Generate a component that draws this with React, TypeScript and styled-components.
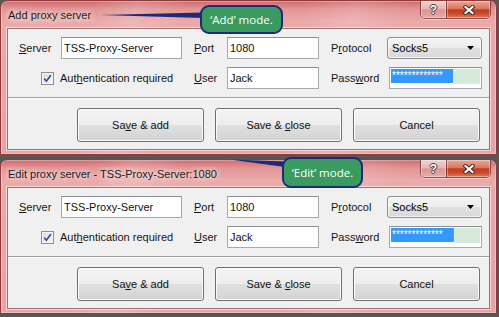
import styled, { createGlobalStyle } from 'styled-components'

const GlobalStyle = createGlobalStyle`
  html, body {
    margin: 0;
    padding: 0;
    background: #575757;
  }
  body {
    font-family: 'Liberation Sans', Arial, sans-serif;
    font-size: 11px;
    color: #151515;
  }
`

const Screen = styled.div`
  position: relative;
  width: 499px;
  height: 317px;
  overflow: hidden;
  display: flex;
  flex-direction: column;
  gap: 4px;
  background: #575757;
`

const Window = styled.div`
  width: 497px;
  height: 155px;
  box-sizing: border-box;
  display: flex;
  flex-direction: column;
  border: 1px solid #8f3a3a;
  border-radius: 7px 7px 0 0;
  overflow: hidden;
  background:
    linear-gradient(100deg, transparent 18%, rgba(255, 255, 255, 0.16) 26%, transparent 36%, transparent 58%, rgba(255, 255, 255, 0.14) 68%, transparent 78%),
    linear-gradient(180deg, #d06b6d 0px, #e29495 8px, #eba9a9 20px, #e8a3a3 100%);
  box-shadow: inset 0 0 0 1px rgba(255, 255, 255, 0.3);
`

const TitleBar = styled.div`
  height: 27px;
  flex-shrink: 0;
  display: flex;
  align-items: flex-start;
  padding: 0 5px 0 7px;
`

const Title = styled.span`
  margin-top: 6px;
  line-height: 16px;
  font-size: 11px;
  color: #1b1b1b;
  text-shadow: 0 0 5px #fff, 0 0 9px rgba(255, 255, 255, 0.8);
`

const CaptionButtons = styled.div`
  margin-left: auto;
  display: flex;
  height: 17px;
  border: 1px solid rgba(90, 35, 35, 0.65);
  border-top: none;
  border-radius: 0 0 5px 5px;
  overflow: hidden;
  box-shadow: 0 1px 0 rgba(255, 255, 255, 0.45);
`

const CaptionButton = styled.div<{ $close?: boolean }>`
  width: ${p => (p.$close ? '43px' : '25px')};
  display: flex;
  align-items: center;
  justify-content: center;
  box-shadow: inset 0 0 0 1px rgba(255, 255, 255, 0.35);
  background: ${p =>
    p.$close
      ? 'linear-gradient(180deg, #e9a896 0%, #da765d 45%, #c23b1d 52%, #cb4a2c 75%, #e27b59 100%)'
      : 'linear-gradient(180deg, #f3d0d0 0%, #eab4b4 45%, #db9797 52%, #e6a9a9 100%)'};
  & + & {
    border-left: 1px solid rgba(90, 35, 35, 0.65);
  }
`

const HelpGlyph = styled.span`
  font-family: 'Liberation Sans', Arial, sans-serif;
  font-weight: bold;
  font-size: 12px;
  line-height: 12px;
  color: #fff;
  text-shadow: 1px 0 #4a3a3a, -1px 0 #4a3a3a, 0 1px #4a3a3a, 0 -1px #4a3a3a;
`

const Frame = styled.div`
  flex: 1;
  display: flex;
  padding: 0 6px 4px;
`

const Panel = styled.div`
  flex: 1;
  display: flex;
  flex-direction: column;
  background: #f0f0f0;
  border: 1px solid #9a7272;
  box-shadow: 0 0 0 1px rgba(255, 255, 255, 0.55);
`

const FormGrid = styled.div`
  display: grid;
  grid-template-columns: 53px 121px 45px 92px 68px 95px;
  grid-auto-rows: 22px;
  row-gap: 8px;
  align-items: center;
  padding: 8px 0;
`

const FieldLabel = styled.label<{ $first?: boolean }>`
  padding-left: ${p => (p.$first ? '11px' : '12px')};
  white-space: nowrap;
`

const Key = styled.u`
  text-decoration: underline;
  text-underline-offset: 1px;
`

const TextInput = styled.input`
  height: 22px;
  width: 100%;
  box-sizing: border-box;
  margin: 0;
  padding: 0 2px;
  border: 1px solid #a6a9ae;
  border-top-color: #8c8f94;
  background: #fff;
  font-family: 'Liberation Sans', Arial, sans-serif;
  font-size: 11px;
  color: #111;
  outline: none;
`

const Combo = styled.div`
  height: 22px;
  box-sizing: border-box;
  display: flex;
  align-items: center;
  justify-content: space-between;
  padding: 0 7px 0 4px;
  border: 1px solid #8e8e8e;
  border-radius: 3px;
  background: linear-gradient(180deg, #f4f4f4 0%, #ececec 50%, #e0e0e0 51%, #dadada 100%);
  box-shadow: inset 0 0 0 1px rgba(255, 255, 255, 0.7);
  color: #000;
`

const PasswordBox = styled.div`
  height: 22px;
  margin-left: 2px;
  box-sizing: border-box;
  display: flex;
  align-items: flex-start;
  padding: 1px;
  border: 1px solid #a6a9ae;
  border-top-color: #8c8f94;
  background: #fff;
`

const Selection = styled.span`
  width: 61px;
  height: 14px;
  display: flex;
  align-items: center;
  padding-left: 1px;
  background: #3399ff;
  color: #fff;
  font-size: 10px;
  line-height: 14px;
  overflow: hidden;
`

const Caret = styled.span`
  width: 1px;
  height: 14px;
  background: #e2801c;
`

const Remainder = styled.span`
  flex: 1;
  height: 15px;
  background: #d6eadb;
`

const CheckField = styled.label`
  grid-column: span 2;
  display: flex;
  align-items: center;
  gap: 6px;
  padding-left: 33px;
  white-space: nowrap;
`

const CheckBox = styled.span`
  width: 13px;
  height: 13px;
  box-sizing: border-box;
  display: flex;
  align-items: center;
  justify-content: center;
  border: 1px solid #8e8f8f;
  background: linear-gradient(135deg, #dadada, #fafafa);
  box-shadow: inset 0 0 0 1px #f5f5f5;
`

const Divider = styled.div`
  height: 1px;
  background: #a0a0a0;
  box-shadow: 0 1px 0 #ffffff;
`

const Actions = styled.div`
  display: flex;
  justify-content: flex-end;
  gap: 11px;
  padding: 10px 9px 7px 0;
`

const Button = styled.button`
  width: 127px;
  height: 34px;
  margin: 0;
  padding: 0;
  border: 1px solid #707070;
  border-radius: 3px;
  background: linear-gradient(180deg, #f4f4f4 0%, #ededed 50%, #e0e0e0 51%, #d3d3d3 100%);
  box-shadow: inset 0 0 0 1px #fbfbfb;
  font-family: 'Liberation Sans', Arial, sans-serif;
  font-size: 11px;
  color: #111;
`

const CalloutBox = styled.div<{ $left: number; $top: number; $width: number; $height: number }>`
  position: absolute;
  left: ${p => p.$left}px;
  top: ${p => p.$top}px;
  width: ${p => p.$width}px;
  height: ${p => p.$height}px;
  box-sizing: border-box;
  display: flex;
  align-items: center;
  justify-content: center;
  border: 2px solid #1c2a78;
  border-radius: 9px;
  background: #3a9a60;
  color: #fff;
  font-family: 'Open Sans', 'Liberation Sans', sans-serif;
  font-weight: 400;
  font-size: 11.5px;
`

const PointerLayer = styled.svg`
  position: absolute;
  left: 0;
  top: 0;
  pointer-events: none;
`

const CloseIcon = () => (
  <svg width="12" height="10" viewBox="0 0 12 10">
    <path d="M2.5 2 L9.5 8 M9.5 2 L2.5 8" stroke="#3b2626" strokeWidth="4" strokeLinecap="square" />
    <path d="M2.5 2 L9.5 8 M9.5 2 L2.5 8" stroke="#ffffff" strokeWidth="2.2" strokeLinecap="square" />
  </svg>
)

const ComboArrow = () => (
  <svg width="7" height="4" viewBox="0 0 7 4">
    <polygon points="0,0 7,0 3.5,4" fill="#000" />
  </svg>
)

const CheckMark = () => (
  <svg width="9" height="9" viewBox="0 0 9 9">
    <path d="M1.2 4.6 L3.4 7.2 L7.8 1.2" stroke="#33509a" strokeWidth="1.7" fill="none" />
  </svg>
)

type DialogProps = {
  title: string
  caret?: boolean
}

const ProxyDialog = ({ title, caret }: DialogProps) => {
  return (
    <Window>
      <TitleBar>
        <Title>{title}</Title>
        <CaptionButtons>
          <CaptionButton>
            <HelpGlyph>?</HelpGlyph>
          </CaptionButton>
          <CaptionButton $close>
            <CloseIcon />
          </CaptionButton>
        </CaptionButtons>
      </TitleBar>
      <Frame>
        <Panel>
          <FormGrid>
            <FieldLabel $first>
              <Key>S</Key>erver
            </FieldLabel>
            <TextInput readOnly value="TSS-Proxy-Server" />
            <FieldLabel>
              <Key>P</Key>ort
            </FieldLabel>
            <TextInput readOnly value="1080" />
            <FieldLabel>
              P<Key>r</Key>otocol
            </FieldLabel>
            <Combo>
              <span>Socks5</span>
              <ComboArrow />
            </Combo>

            <CheckField>
              <CheckBox>
                <CheckMark />
              </CheckBox>
              <span>
                Aut<Key>h</Key>entication required
              </span>
            </CheckField>
            <FieldLabel>
              <Key>U</Key>ser
            </FieldLabel>
            <TextInput readOnly value="Jack" />
            <FieldLabel>
              Pass<Key>w</Key>ord
            </FieldLabel>
            <PasswordBox>
              <Selection>*************</Selection>
              {caret && <Caret />}
              <Remainder />
            </PasswordBox>
          </FormGrid>
          <Divider />
          <Actions>
            <Button>
              Sa<Key>v</Key>e &amp; add
            </Button>
            <Button>
              Save &amp; <Key>c</Key>lose
            </Button>
            <Button>Cancel</Button>
          </Actions>
        </Panel>
      </Frame>
    </Window>
  )
}

export default function App() {
  return (
    <>
      <GlobalStyle />
      <Screen>
        <ProxyDialog title="Add proxy server" />
        <ProxyDialog title="Edit proxy server - TSS-Proxy-Server:1080" caret />

        <PointerLayer width="499" height="317" viewBox="0 0 499 317">
          <polygon points="100,15 203,12.5 203,18" fill="#1c2a78" />
          <polygon points="230,159.5 285,161.5 285,167" fill="#1c2a78" />
        </PointerLayer>
        <CalloutBox $left={200} $top={5} $width={83} $height={29}>
          ‘Add’ mode.
        </CalloutBox>
        <CalloutBox $left={282} $top={157} $width={81} $height={31}>
          ‘Edit’ mode.
        </CalloutBox>
      </Screen>
    </>
  )
}
